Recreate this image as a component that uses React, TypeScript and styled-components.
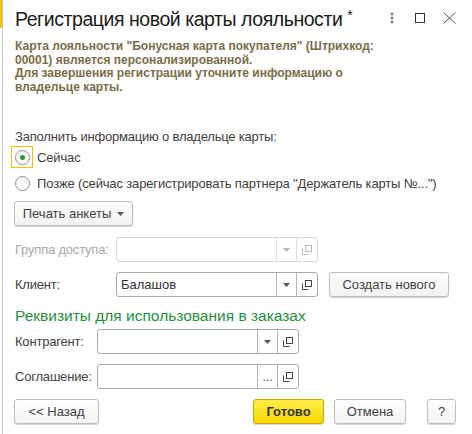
import React from "react";
import styled, { createGlobalStyle } from "styled-components";

const Global = createGlobalStyle`
  html, body { margin: 0; padding: 0; background: #fff; }
  body { font-family: "Liberation Sans", Arial, sans-serif; color: #404040; }
  * { box-sizing: border-box; }
`;

const Root = styled.div`
  width: 472px;
  height: 434px;
  display: flex;
  background: #fff;
  overflow: hidden;
  font-family: "Liberation Sans", Arial, sans-serif;
`;

const Edge = styled.div`
  width: 2px;
  flex: none;
  display: flex;
  flex-direction: column;
`;

const EdgeMark = styled.div`
  height: 28px;
  background: #f5c400;
`;

const Main = styled.div`
  flex: 1;
  border-left: 1px solid #c9c9c9;
  padding: 0 16px 0 12px;
  display: flex;
  flex-direction: column;
`;

const TitleBar = styled.div`
  height: 36px;
  display: flex;
  align-items: center;
`;

const Title = styled.div`
  flex: 1;
  font-size: 19.5px;
  letter-spacing: -0.45px;
  color: #1a1a1a;
  white-space: nowrap;
  padding-top: 1px;
`;

const Star = styled.span`
  font-size: 14px;
  vertical-align: 6px;
  margin-left: 5px;
`;

const WinButtons = styled.div`
  display: flex;
  align-items: center;
  margin-right: -6px;
`;

const WinIcon = styled.div<{ $w: number }>`
  width: ${(p) => p.$w}px;
  height: 20px;
  display: flex;
  align-items: center;
  justify-content: center;
`;

const Message = styled.div`
  margin-top: 4px;
  font-size: 12px;
  line-height: 13.5px;
  font-weight: bold;
  color: #7b6c48;
  width: 370px;
`;

const FillLabel = styled.div`
  margin-top: 35px;
  font-size: 13px;
  letter-spacing: -0.2px;
  line-height: 16px;
  color: #404040;
`;

const RadioGroup = styled.div`
  margin-left: -4px;
  display: flex;
  flex-direction: column;
  gap: 4px;
  margin-top: 1px;
`;

const RadioRow = styled.div`
  display: flex;
  align-items: center;
  height: 22px;
  font-size: 13px;
  letter-spacing: -0.15px;
  color: #404040;
  white-space: nowrap;
`;

const RadioFocus = styled.div<{ $focus?: boolean }>`
  width: 22px;
  height: 22px;
  border: 1px solid ${(p) => (p.$focus ? "#f2c200" : "transparent")};
  display: flex;
  align-items: center;
  justify-content: center;
  margin-right: 4px;
`;

const RadioCircle = styled.div`
  width: 15px;
  height: 15px;
  border-radius: 50%;
  border: 1px solid #8d8d8d;
  background: linear-gradient(#f4f4f4, #fff);
  display: flex;
  align-items: center;
  justify-content: center;
`;

const RadioDot = styled.div`
  width: 5px;
  height: 5px;
  border-radius: 50%;
  background: #1f9a3b;
`;

const Button = styled.div<{ $w: number; $primary?: boolean }>`
  width: ${(p) => p.$w}px;
  height: 25px;
  flex: none;
  border-radius: 3px;
  border: 1px solid ${(p) => (p.$primary ? "#c9a800" : "#bdbdbd")};
  background: ${(p) =>
    p.$primary
      ? "linear-gradient(#fff04a, #f5d400)"
      : "linear-gradient(#ffffff, #f2f2f2)"};
  box-shadow: 0 1px 1px rgba(0, 0, 0, 0.18);
  display: flex;
  align-items: center;
  justify-content: center;
  font-size: 13px;
  font-weight: ${(p) => (p.$primary ? "bold" : "normal")};
  color: ${(p) => (p.$primary ? "#333" : "#404040")};
  white-space: nowrap;
`;

const PrintButton = styled(Button)`
  margin-top: 7px;
  margin-left: -1px;
  gap: 6px;
`;

const Form = styled.div<{ $label: number }>`
  display: grid;
  grid-template-columns: ${(p) => p.$label}px auto 1fr;
  row-gap: 10px;
  align-items: center;
`;

const Label = styled.div<{ $disabled?: boolean }>`
  font-size: 13px;
  letter-spacing: -0.2px;
  color: ${(p) => (p.$disabled ? "#a8a8a8" : "#404040")};
  white-space: nowrap;
`;

const Field = styled.div<{ $disabled?: boolean }>`
  width: 202px;
  height: 25px;
  border: 1px solid ${(p) => (p.$disabled ? "#d9d9d9" : "#a9a9a9")};
  border-radius: 3px;
  background: #fff;
  display: flex;
  align-items: stretch;
`;

const FieldText = styled.div`
  flex: 1;
  padding-left: 4px;
  font-size: 13px;
  color: #333;
  display: flex;
  align-items: center;
`;

const FieldButton = styled.div<{ $disabled?: boolean; $w: number }>`
  width: ${(p) => p.$w}px;
  border-left: 1px solid ${(p) => (p.$disabled ? "#e0e0e0" : "#b5b5b5")};
  display: flex;
  align-items: center;
  justify-content: center;
  color: ${(p) => (p.$disabled ? "#b5b5b5" : "#444")};
  font-size: 12px;
`;

const CreateButton = styled(Button)`
  margin-left: 11px;
  justify-self: start;
`;

const Section1 = styled(Form)`
  margin-top: 11px;
`;

const Heading = styled.div`
  margin-top: 9px;
  font-size: 15.5px;
  line-height: 20px;
  color: #1f8f3c;
  white-space: nowrap;
`;

const Section2 = styled(Form)`
  margin-top: 3px;
`;

const Footer = styled.div`
  margin-top: 10px;
  margin-left: -1px;
  display: flex;
  align-items: center;
`;

const Spacer = styled.div<{ $w?: number }>`
  ${(p) => (p.$w ? `width: ${p.$w}px; flex: none;` : "flex: 1;")}
`;

const Arrow = ({ color = "#555" }: { color?: string }) => (
  <svg width="7" height="4" viewBox="0 0 7 4">
    <path d="M0 0H7L3.5 4Z" fill={color} />
  </svg>
);

const CopyIcon = ({ color = "#444" }: { color?: string }) => (
  <svg width="10" height="10" viewBox="0 0 10 10" fill="none">
    <rect x="3.5" y="0.5" width="6" height="6" stroke={color} />
    <path d="M0.5 3.5V9.5H6.5" stroke={color} />
  </svg>
);

const DDField = ({
  text,
  disabled,
  dots,
}: {
  text?: string;
  disabled?: boolean;
  dots?: boolean;
}) => {
  const c = disabled ? "#b8b8b8" : "#444";
  return (
    <Field $disabled={disabled}>
      <FieldText>{text}</FieldText>
      <FieldButton $disabled={disabled} $w={20}>
        {dots ? "..." : <Arrow color={disabled ? "#b8b8b8" : "#555"} />}
      </FieldButton>
      <FieldButton $disabled={disabled} $w={21}>
        <CopyIcon color={c} />
      </FieldButton>
    </Field>
  );
};

export default function App() {
  return (
    <Root>
      <Global />
      <Edge>
        <EdgeMark />
      </Edge>
      <Main>
        <TitleBar>
          <Title>
            Регистрация новой карты лояльности<Star>*</Star>
          </Title>
          <WinButtons>
            <WinIcon $w={24}>
              <svg width="4" height="12" viewBox="0 0 4 12">
                <circle cx="2" cy="2" r="1.4" fill="#777" />
                <circle cx="2" cy="6" r="1.4" fill="#777" />
                <circle cx="2" cy="10" r="1.4" fill="#777" />
              </svg>
            </WinIcon>
            <WinIcon $w={32}>
              <svg width="10" height="10" viewBox="0 0 10 10">
                <rect x="0.5" y="0.5" width="9" height="9" fill="none" stroke="#333" />
              </svg>
            </WinIcon>
            <WinIcon $w={26}>
              <svg width="13" height="12" viewBox="0 0 13 12">
                <path d="M0.5 0.5L12.5 11.5M12.5 0.5L0.5 11.5" stroke="#555" strokeWidth="1" />
              </svg>
            </WinIcon>
          </WinButtons>
        </TitleBar>
        <Message>
          Карта лояльности "Бонусная карта покупателя" (Штрихкод: 00001) является персонализированной.
          <br />
          Для завершения регистрации уточните информацию о владельце карты.
        </Message>
        <FillLabel>Заполнить информацию о владельце карты:</FillLabel>
        <RadioGroup>
          <RadioRow>
            <RadioFocus $focus>
              <RadioCircle>
                <RadioDot />
              </RadioCircle>
            </RadioFocus>
            Сейчас
          </RadioRow>
          <RadioRow>
            <RadioFocus>
              <RadioCircle />
            </RadioFocus>
            Позже (сейчас зарегистрировать партнера "Держатель карты №...")
          </RadioRow>
        </RadioGroup>
        <PrintButton $w={119}>
          Печать анкеты <Arrow />
        </PrintButton>
        <Section1 $label={101}>
          <Label $disabled>Группа доступа:</Label>
          <DDField disabled />
          <span />
          <Label>Клиент:</Label>
          <DDField text="Балашов" />
          <CreateButton $w={120}>Создать нового</CreateButton>
        </Section1>
        <Heading>Реквизиты для использования в заказах</Heading>
        <Section2 $label={82}>
          <Label>Контрагент:</Label>
          <DDField />
          <span />
          <Label>Соглашение:</Label>
          <DDField dots />
          <span />
        </Section2>
        <Footer>
          <Button $w={85}>&lt;&lt; Назад</Button>
          <Spacer />
          <Button $w={71} $primary>
            Готово
          </Button>
          <Spacer $w={10} />
          <Button $w={72}>Отмена</Button>
          <Spacer $w={21} />
          <Button $w={29}>?</Button>
        </Footer>
      </Main>
    </Root>
  );
}
